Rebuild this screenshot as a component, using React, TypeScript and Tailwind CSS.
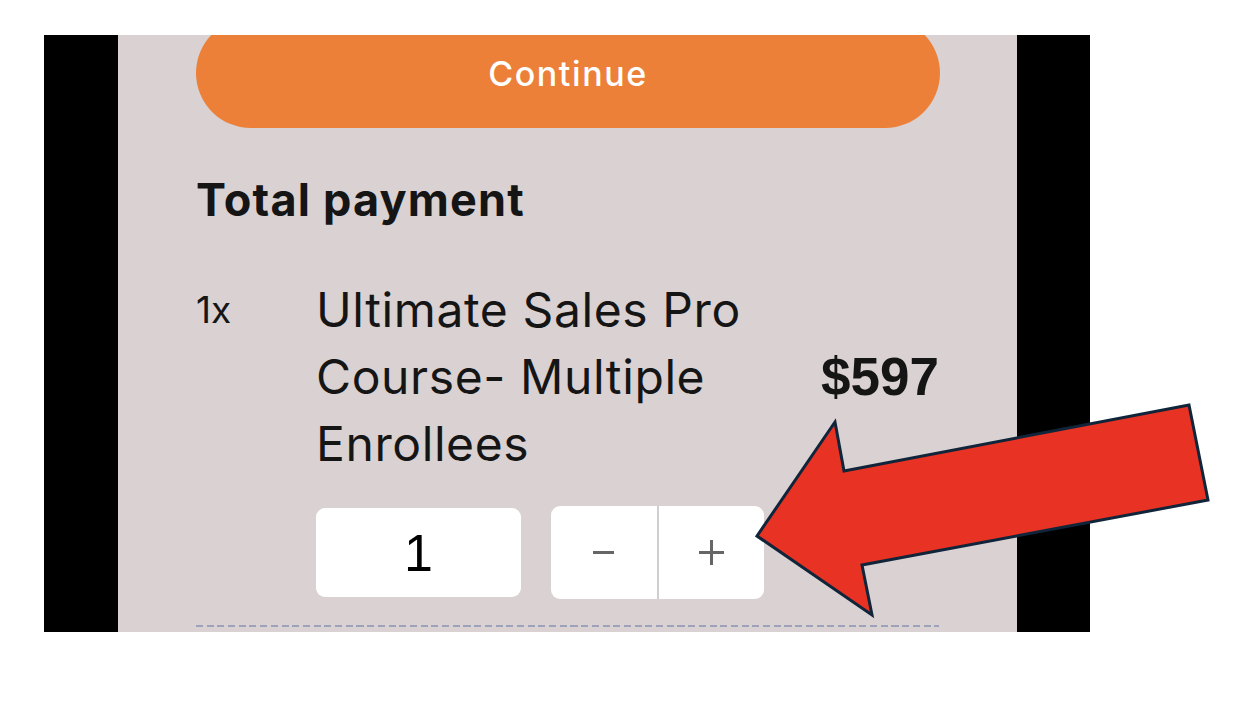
import React from "react";

export default function App() {
  return (
    <div className="relative w-[1260px] h-[702px] bg-white overflow-hidden pt-[35px] pl-[44px]">
      <div className="w-[1046px] h-[597px] bg-black pl-[74px]">
        <div
          className="w-[899px] h-full bg-[#d9d1d2] overflow-hidden px-[78px]"
          style={{ fontFamily: "Inter, 'Noto Sans', sans-serif" }}
        >
          <button className="mt-[-17px] w-[744px] h-[110px] rounded-full bg-[#ec8039] text-white text-[34px] font-medium tracking-[1.6px] flex items-center justify-center">
            Continue
          </button>
          <h2 className="mt-[47px] text-[45px] leading-[50px] font-bold text-[#151515] tracking-[1.2px]">
            Total payment
          </h2>
          <div className="mt-[51px] flex items-center text-[#151515]">
            <div className="w-[120px] self-start text-[37px] leading-[67px]">1x</div>
            <div className="flex-1 text-[48px] leading-[67px] tracking-[0.6px]">
              <div>Ultimate Sales Pro</div>
              <div>Course- Multiple</div>
              <div>Enrollees</div>
            </div>
            <div
              className="text-[53px] font-bold leading-none"
              style={{ fontFamily: "'Liberation Sans', Arial, sans-serif" }}
            >
              $597
            </div>
          </div>
          <div className="mt-[29px] ml-[120px] flex items-center gap-[30px]">
            <div
              className="w-[205px] h-[89px] rounded-[9px] bg-white flex items-center justify-center text-[52px] text-black"
              style={{ fontFamily: "'Liberation Sans', Arial, sans-serif" }}
            >
              1
            </div>
            <div className="w-[213px] h-[93px] rounded-[9px] bg-white flex overflow-hidden">
              <div className="flex-1 flex items-center justify-center">
                <div className="w-[21px] h-[3px] bg-[#666]" />
              </div>
              <div className="w-[2px] bg-[#cfcfcf]" />
              <div className="flex-1 flex items-center justify-center">
                <div className="relative w-[25px] h-[25px]">
                  <div className="absolute left-0 top-[11px] w-[25px] h-[3px] bg-[#666]" />
                  <div className="absolute top-0 left-[11px] w-[3px] h-[25px] bg-[#666]" />
                </div>
              </div>
            </div>
          </div>
          <div className="mt-[26px] h-[2px] bg-[repeating-linear-gradient(90deg,#9da2ba_0_7px,transparent_7px_10.7px)]" />
        </div>
      </div>
      <svg className="absolute left-0 top-0 pointer-events-none" width="1260" height="702" viewBox="0 0 1260 702">
        <polygon
          points="757,536 835,422 844,471 1189,405 1208,500 862,565 872,615"
          fill="#e83223"
          stroke="#10253a"
          strokeWidth="3"
          strokeLinejoin="miter"
        />
      </svg>
    </div>
  );
}
